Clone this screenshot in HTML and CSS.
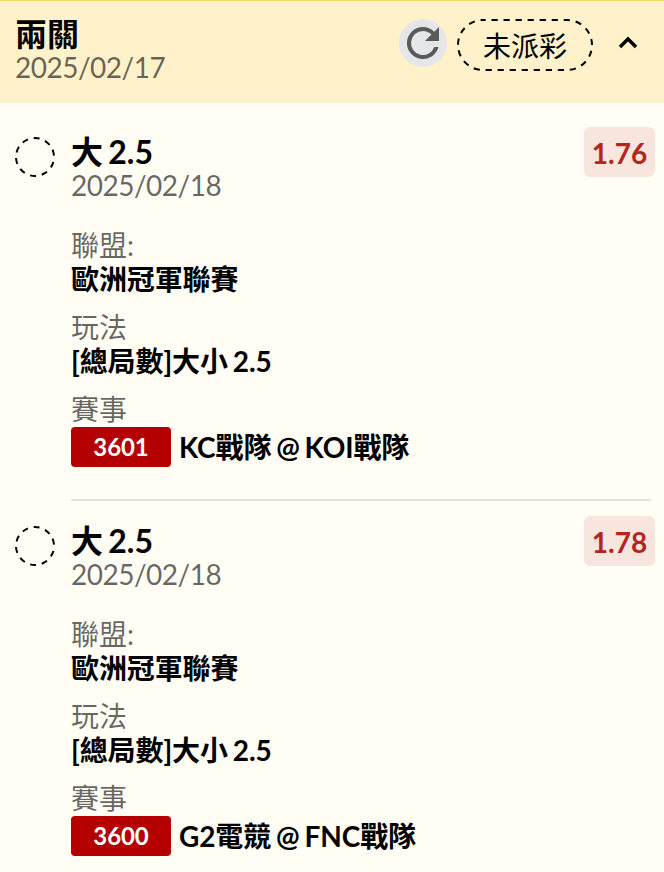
FILE: index.html
```html
<!DOCTYPE html>
<html lang="zh-Hant">

<head>
    <meta charset="UTF-8">
    <meta name="viewport" content="width=device-width, initial-scale=1.0">
    <title>兩關</title>
    <link rel="stylesheet" href="styles.css">
</head>

<body>

    <header class="bet-header">
        <div class="bet-title">
            <h1>兩關</h1>
            <p class="date">2025/02/17</p>
        </div>
        <button class="refresh" aria-label="重新整理">
            <svg viewBox="0 0 24 24" width="48" height="48">
                <path d="M17.65 6.35A7.96 7.96 0 0 0 12 4a8 8 0 1 0 7.73 10h-2.08A6 6 0 1 1 12 6c1.66 0 3.14.69 4.22 1.78L13 11h7V4z" />
            </svg>
        </button>
        <span class="status">
            <svg viewBox="0 0 136 52" width="136" height="52">
                <rect x="1" y="1" width="134" height="50" rx="25" />
            </svg>
            未派彩
        </span>
        <button class="toggle" aria-label="收合">
            <svg viewBox="0 0 20 14" width="20" height="14">
                <path d="M2 12L10 4L18 12" />
            </svg>
        </button>
    </header>

    <main>
        <section class="bet">
            <svg class="circle" viewBox="0 0 40 40" width="40" height="40">
                <circle cx="20" cy="20" r="19" />
            </svg>
            <div class="bet-body">
                <div class="bet-top">
                    <div>
                        <h2>大 2.5</h2>
                        <p class="date">2025/02/18</p>
                    </div>
                    <span class="odds">1.76</span>
                </div>
                <dl>
                    <dt>聯盟:</dt>
                    <dd>歐洲冠軍聯賽</dd>
                    <dt>玩法</dt>
                    <dd>[總局數]大小 2.5</dd>
                    <dt>賽事</dt>
                    <dd class="match"><span class="number">3601</span>KC戰隊 @ KOI戰隊</dd>
                </dl>
            </div>
        </section>

        <section class="bet">
            <svg class="circle" viewBox="0 0 40 40" width="40" height="40">
                <circle cx="20" cy="20" r="19" />
            </svg>
            <div class="bet-body">
                <div class="bet-top">
                    <div>
                        <h2>大 2.5</h2>
                        <p class="date">2025/02/18</p>
                    </div>
                    <span class="odds">1.78</span>
                </div>
                <dl>
                    <dt>聯盟:</dt>
                    <dd>歐洲冠軍聯賽</dd>
                    <dt>玩法</dt>
                    <dd>[總局數]大小 2.5</dd>
                    <dt>賽事</dt>
                    <dd class="match"><span class="number">3600</span>G2電競 @ FNC戰隊</dd>
                </dl>
            </div>
        </section>
    </main>

</body>

</html>
```

FILE: styles.css
```css
* {
    box-sizing: border-box;
}

body {
    font-family: Lato, 'Noto Sans CJK TC', sans-serif;
    margin: 0;
    background-color: #fffdf4;
    color: #000;
    font-size: 28px;
    overflow: hidden;
}

h1,
h2,
p,
dl,
dd {
    margin: 0;
}

button {
    border: none;
    background: none;
    padding: 0;
    display: block;
}

svg {
    display: block;
}

.bet-header {
    display: flex;
    align-items: flex-start;
    height: 103px;
    padding: 16px 26px 0 15px;
    background-color: #fff2cb;
    border-top: 1px solid #f0dc60;
}

.bet-title {
    flex: 1;
}

h1,
h2 {
    font-size: 32px;
    line-height: 33px;
    font-weight: 700;
    word-spacing: -2.5px;
}

.date {
    font-size: 28px;
    line-height: 34px;
    letter-spacing: -0.5px;
    color: rgba(0, 0, 0, 0.6);
}

.refresh {
    width: 48px;
    height: 48px;
    margin-top: 2px;
    border-radius: 50%;
    background-color: #e5e6e8;
}

.refresh path {
    fill: #5a5a5a;
}

.status {
    position: relative;
    width: 136px;
    height: 52px;
    margin: 2px 25px 0 10px;
    text-align: center;
    line-height: 54px;
}

.status svg {
    position: absolute;
    top: 0;
    left: 0;
}

.status rect {
    fill: none;
    stroke: #000;
    stroke-width: 2;
    stroke-dasharray: 6.2 5.84;
    stroke-dashoffset: -8.5;
}

.toggle {
    margin-top: 18px;
}

.toggle path {
    fill: none;
    stroke: #000;
    stroke-width: 3.4;
}

/* 注單 */
.bet {
    display: flex;
    gap: 16px;
    padding: 24px 9px 0 15px;
}

.circle {
    flex: none;
    margin-top: 10px;
}

.circle circle {
    fill: none;
    stroke: #000;
    stroke-width: 2;
    stroke-dasharray: 6 5.8;
    stroke-dashoffset: -5;
}

.bet-body {
    flex: 1;
}

.bet + .bet {
    padding-top: 0;
}

.bet-top {
    display: flex;
    justify-content: space-between;
    height: 101px;
}

.bet-top h2 {
    margin-top: 8px;
}

.odds {
    width: 71px;
    height: 50px;
    border-radius: 6px;
    background-color: #f8e5de;
    color: #b3261e;
    font-weight: 700;
    text-align: center;
    line-height: 52px;
}

dl {
    height: 273px;
    margin-right: 4px;
    border-bottom: 2px solid #e4e2dc;
    margin-bottom: 15px;
}

dt {
    line-height: 34px;
    color: rgba(0, 0, 0, 0.6);
}

dd {
    line-height: 34px;
    margin-bottom: 14px;
    font-weight: 700;
    letter-spacing: -0.1px;
    word-spacing: -1.8px;
}

.match {
    display: flex;
    align-items: center;
    gap: 8px;
    height: 40px;
    margin-top: 1px;
    line-height: 36px;
}

.number {
    width: 100px;
    height: 40px;
    border-radius: 4px;
    background-color: #b50000;
    color: #fff;
    font-size: 24px;
    line-height: 40px;
    text-align: center;
}
```
